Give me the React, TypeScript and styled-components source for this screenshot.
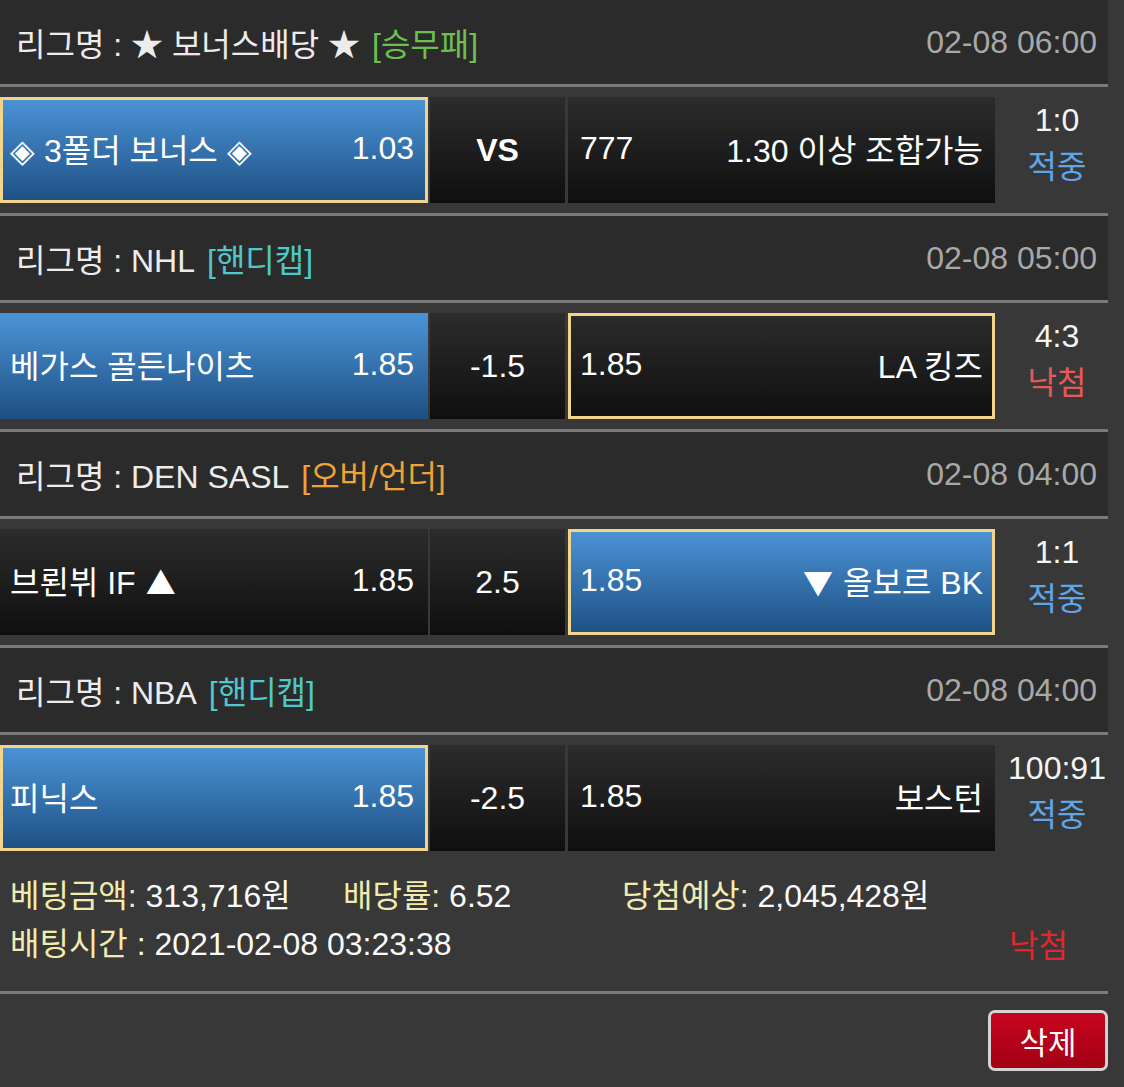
import React from "react";
import styled, { createGlobalStyle } from "styled-components";

const GlobalStyle = createGlobalStyle`
  html, body {
    margin: 0;
    padding: 0;
    background: #383838;
  }
  body {
    font-family: "Liberation Sans", "Noto Sans CJK KR", "Noto Sans", sans-serif;
    color: #f2f2f2;
  }
`;

type Side = "home" | "away" | null;

interface Match {
  league: string;
  type: string;
  typeColor: string;
  time: string;
  home: string;
  homeMark?: string;
  homeOdds: string;
  mid: string;
  midBold?: boolean;
  awayOdds: string;
  away: string;
  awayMark?: string;
  pick: Side;
  selected: Side;
  score: string;
  result: "hit" | "miss";
}

const matches: Match[] = [
  {
    league: "★ 보너스배당 ★",
    type: "[승무패]",
    typeColor: "#6cc04e",
    time: "02-08 06:00",
    home: "◈ 3폴더 보너스 ◈",
    homeOdds: "1.03",
    mid: "VS",
    midBold: true,
    awayOdds: "777",
    away: "1.30 이상 조합가능",
    pick: "home",
    selected: "home",
    score: "1:0",
    result: "hit",
  },
  {
    league: "NHL",
    type: "[핸디캡]",
    typeColor: "#4ec8c8",
    time: "02-08 05:00",
    home: "베가스 골든나이츠",
    homeOdds: "1.85",
    mid: "-1.5",
    awayOdds: "1.85",
    away: "LA 킹즈",
    pick: "home",
    selected: "away",
    score: "4:3",
    result: "miss",
  },
  {
    league: "DEN SASL",
    type: "[오버/언더]",
    typeColor: "#f0a236",
    time: "02-08 04:00",
    home: "브뢴뷔 IF",
    homeMark: "▲",
    homeOdds: "1.85",
    mid: "2.5",
    awayOdds: "1.85",
    away: "올보르 BK",
    awayMark: "▼",
    pick: "away",
    selected: "away",
    score: "1:1",
    result: "hit",
  },
  {
    league: "NBA",
    type: "[핸디캡]",
    typeColor: "#4ec8c8",
    time: "02-08 04:00",
    home: "피닉스",
    homeOdds: "1.85",
    mid: "-2.5",
    awayOdds: "1.85",
    away: "보스턴",
    pick: "home",
    selected: "home",
    score: "100:91",
    result: "hit",
  },
];

const Page = styled.div`
  width: 1108px;
  font-size: 32px;
`;

const LeagueHeader = styled.div`
  height: 84px;
  background: #2b2b2b;
  display: flex;
  align-items: center;
  justify-content: space-between;
  padding: 0 11px 0 16px;
  border-bottom: 3px solid #7a7a7a;
`;

const LeagueName = styled.div`
  color: #ececec;
  white-space: nowrap;
`;

const BetType = styled.span<{ $color: string }>`
  color: ${(p) => p.$color};
  margin-left: 12px;
`;

const Time = styled.div`
  color: #a8a8a8;
`;

const MatchRow = styled.div<{ $last?: boolean }>`
  display: flex;
  height: 106px;
  padding: 10px 0;
  border-bottom: ${(p) => (p.$last ? "none" : "3px solid #7a7a7a")};
`;

const Cell = styled.div<{ $picked?: boolean; $selected?: boolean; $w: number }>`
  width: ${(p) => p.$w}px;
  box-sizing: border-box;
  display: flex;
  align-items: center;
  justify-content: space-between;
  color: #fff;
  background: ${(p) =>
    p.$picked
      ? "linear-gradient(#4c94d7, #1d4f83)"
      : "linear-gradient(#2c2c2c, #0f0f0f)"};
  background-origin: border-box;
  border: 3px solid ${(p) => (p.$selected ? "#f2d58a" : "transparent")};
  white-space: nowrap;
  padding-bottom: 4px;
`;

const HomeCell = styled(Cell)`
  padding-left: 7px;
  padding-right: 11px;
`;

const MidCell = styled(Cell)<{ $bold?: boolean }>`
  margin-left: 2px;
  justify-content: center;
  padding-bottom: 0;
  font-weight: ${(p) => (p.$bold ? 700 : 400)};
`;

const AwayCell = styled(Cell)`
  margin-left: 3px;
  padding-left: 9px;
  padding-right: 9px;
`;

const Mark = styled.span`
  font-family: "Noto Sans CJK KR", sans-serif;
  font-size: 30px;
  margin: 0 10px;
`;

const ResultCol = styled.div`
  flex: 1;
  display: flex;
  flex-direction: column;
  align-items: center;
  line-height: 47px;
  padding-left: 11px;
`;

const Score = styled.div`
  color: #f4f4f4;
`;

const Status = styled.div<{ $hit: boolean }>`
  color: ${(p) => (p.$hit ? "#5ea6e6" : "#e35a5a")};
`;

const Summary = styled.div`
  padding: 12px 40px 22px 10px;
  line-height: 46px;
  border-bottom: 3px solid #7a7a7a;
`;

const SummaryLine = styled.div`
  display: flex;
  align-items: center;
`;

const SummaryItem = styled.div<{ $w?: number }>`
  width: ${(p) => (p.$w ? `${p.$w}px` : "auto")};
  white-space: nowrap;
`;

const Label = styled.span`
  color: #f2ebb0;
`;

const Value = styled.span`
  color: #fafafa;
`;

const FinalStatus = styled.div`
  margin-left: auto;
  color: #e3262a;
  padding-top: 4px;
`;

const Footer = styled.div`
  display: flex;
  justify-content: flex-end;
  padding: 16px 0 15px;
`;

const DeleteButton = styled.button`
  width: 120px;
  height: 61px;
  border: 3px solid #d4d4d4;
  border-radius: 7px;
  background: linear-gradient(#c8061e, #a10014);
  color: #fff;
  font-family: inherit;
  font-size: 31px;
  padding: 0;
  cursor: pointer;
`;

export default function App() {
  return (
    <>
      <GlobalStyle />
      <Page>
        {matches.map((m, i) => (
          <React.Fragment key={i}>
            <LeagueHeader>
              <LeagueName>
                리그명 : {m.league}
                <BetType $color={m.typeColor}>{m.type}</BetType>
              </LeagueName>
              <Time>{m.time}</Time>
            </LeagueHeader>
            <MatchRow $last={i === matches.length - 1}>
              <HomeCell
                $w={428}
                $picked={m.pick === "home"}
                $selected={m.selected === "home"}
              >
                <span>
                  {m.home}
                  {m.homeMark && <Mark>{m.homeMark}</Mark>}
                </span>
                <span>{m.homeOdds}</span>
              </HomeCell>
              <MidCell $w={135} $bold={m.midBold}>
                {m.mid}
              </MidCell>
              <AwayCell
                $w={427}
                $picked={m.pick === "away"}
                $selected={m.selected === "away"}
              >
                <span>{m.awayOdds}</span>
                <span>
                  {m.awayMark && <Mark>{m.awayMark}</Mark>}
                  {m.away}
                </span>
              </AwayCell>
              <ResultCol>
                <Score>{m.score}</Score>
                <Status $hit={m.result === "hit"}>
                  {m.result === "hit" ? "적중" : "낙첨"}
                </Status>
              </ResultCol>
            </MatchRow>
          </React.Fragment>
        ))}
        <Summary>
          <SummaryLine>
            <SummaryItem $w={333}>
              <Label>베팅금액:</Label> <Value>313,716원</Value>
            </SummaryItem>
            <SummaryItem $w={279}>
              <Label>배당률:</Label> <Value>6.52</Value>
            </SummaryItem>
            <SummaryItem>
              <Label>당첨예상:</Label> <Value>2,045,428원</Value>
            </SummaryItem>
          </SummaryLine>
          <SummaryLine>
            <SummaryItem>
              <Label>배팅시간</Label> <Value>: 2021-02-08 03:23:38</Value>
            </SummaryItem>
            <FinalStatus>낙첨</FinalStatus>
          </SummaryLine>
        </Summary>
        <Footer>
          <DeleteButton>삭제</DeleteButton>
        </Footer>
      </Page>
    </>
  );
}
